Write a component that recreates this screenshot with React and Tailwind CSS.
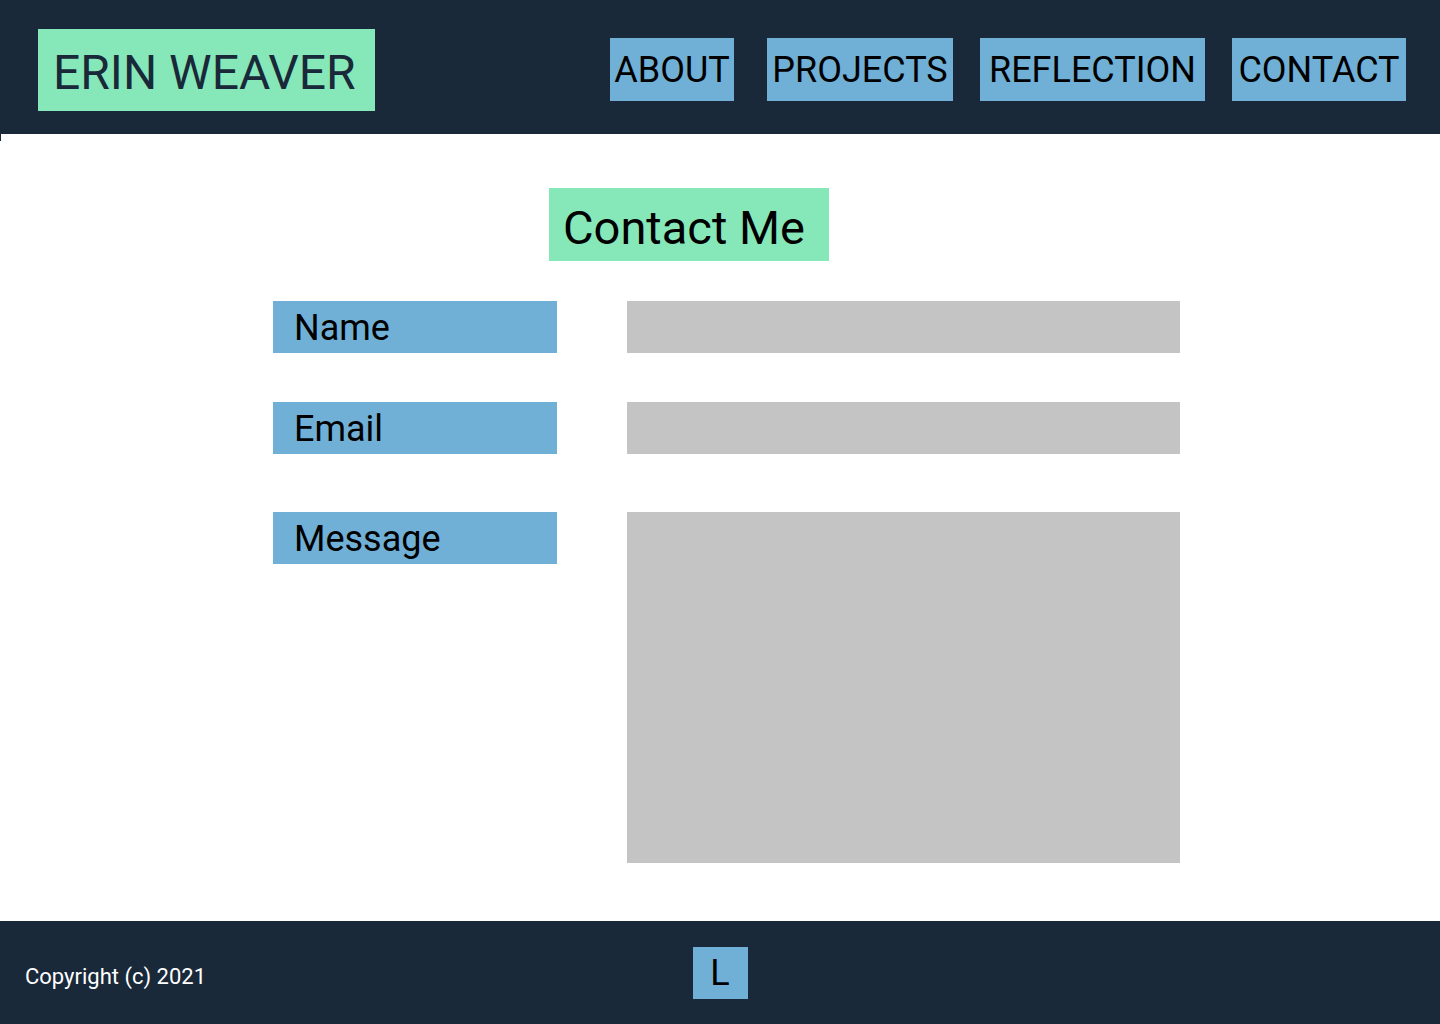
const navItems = [
  { label: 'ABOUT', w: 'w-[124px]' },
  { label: 'PROJECTS', w: 'w-[186px]' },
  { label: 'REFLECTION', w: 'w-[225px]' },
  { label: 'CONTACT', w: 'w-[174px]' },
]

const fields = [
  { label: 'Name', rowClass: 'mt-[40px]', inputH: 'h-[52px]' },
  { label: 'Email', rowClass: 'mt-[49px]', inputH: 'h-[52px]' },
  { label: 'Message', rowClass: 'mt-[58px]', inputH: 'h-[351px]' },
]

function App() {
  return (
    <div className="min-h-screen flex flex-col bg-white font-['Roboto',sans-serif]">
      {/* Header */}
      <header className="h-[134px] bg-[#19293a] flex items-start justify-between shrink-0">
        <div className="ml-[38px] mt-[29px] h-[82px] w-[337px] bg-[#86e8b8] flex items-center pl-[15px] pt-[6px]">
          <span className="text-[48px] leading-none text-[#19293a]">ERIN WEAVER</span>
        </div>
        <nav className="mt-[38px] mr-[34px] flex">
          {navItems.map((item, i) => (
            <a
              key={item.label}
              href="#"
              className={`${item.w} h-[63px] bg-[#71b0d6] flex items-center justify-center text-[36px] leading-none text-black ${
                i === 0 ? '' : i === 1 ? 'ml-[33px]' : 'ml-[27px]'
              }`}
            >
              {item.label}
            </a>
          ))}
        </nav>
      </header>
      <div className="w-px h-[7px] bg-[#19293a] -mb-[7px]" />

      {/* Main */}
      <main className="h-[787px] flex flex-col">
        <div className="ml-[549px] mt-[54px] w-[280px] h-[73px] bg-[#86e8b8] flex items-center pl-[14px] pt-[6px]">
          <h1 className="text-[47px] leading-none text-black">Contact Me</h1>
        </div>

        {fields.map((f) => (
          <div key={f.label} className={`${f.rowClass} ml-[273px] flex items-start`}>
            <div className="w-[284px] h-[52px] bg-[#71b0d6] flex items-center pl-[21px] pt-[1px]">
              <span className="text-[36px] leading-none text-black">{f.label}</span>
            </div>
            <div className={`ml-[70px] w-[553px] ${f.inputH} bg-[#c4c4c4]`} />
          </div>
        ))}
      </main>

      {/* Footer */}
      <footer className="h-[103px] bg-[#19293a] grid grid-cols-3 items-center">
        <div className="pl-[25px] text-[22px] text-white leading-none pt-[8px]">Copyright (c) 2021</div>
        <div className="flex justify-center">
          <div className="w-[55px] h-[52px] bg-[#71b0d6] flex items-center justify-center text-[36px] leading-none text-black">
            L
          </div>
        </div>
        <div />
      </footer>
    </div>
  )
}

export default App
